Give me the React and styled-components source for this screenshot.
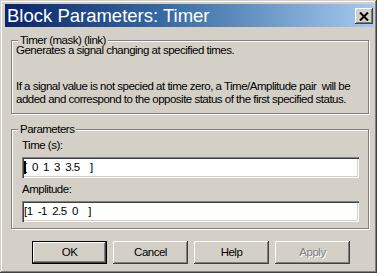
import React from 'react'
import styled, { createGlobalStyle } from 'styled-components'

const GlobalStyle = createGlobalStyle`
	html, body {
		margin: 0;
		padding: 0;
		background: #ffffff;
	}
`;

const face = `"Liberation Sans", Arial, sans-serif`;

const Window = styled("div")`
	box-sizing: border-box;
	width: 377px;
	height: 273px;
	padding: 4px 3px 0 5px;
	background: #D4D0C8;
	box-shadow:
		inset -1px -1px 0 #404040,
		inset 1px 1px 0 #D4D0C8,
		inset -2px -2px 0 #808080,
		inset 2px 2px 0 #ffffff;
	display: flex;
	flex-direction: column;
	font-family: ${face};
	font-size: 11.5px;
	letter-spacing: -0.5px;
	line-height: 13px;
	color: #000;
`;

const TitleBar = styled("div")`
	height: 23px;
	display: flex;
	align-items: center;
	justify-content: space-between;
	padding: 0 1px 0 2px;
	background: linear-gradient(to right, #0A246A 0%, #3A6EA5 45%, #A6CAF0 100%);
`;

const Title = styled("span")`
	font-size: 18.5px;
	letter-spacing: 0;
	color: #ffffff;
	line-height: 23px;
	white-space: nowrap;
`;

const CloseButton = styled("div")`
	box-sizing: border-box;
	width: 18px;
	height: 16px;
	margin-top: 1px;
	background: #D4D0C8;
	box-shadow:
		inset -1px -1px 0 #404040,
		inset 1px 1px 0 #ffffff,
		inset -2px -2px 0 #808080;
	display: flex;
	align-items: center;
	justify-content: center;
`;

const Body = styled("div")`
	display: flex;
	flex-direction: column;
	padding: 13px 0 0 6px;
`;

const Group = styled("div")`
	position: relative;
	box-sizing: border-box;
	width: 358px;
	margin-top: ${p => p.$top || 0}px;
	border: 1px solid #808080;
	box-shadow: inset 1px 1px 0 #ffffff, 1px 1px 0 #ffffff;
	padding: ${p => p.$pad};
	display: flex;
	flex-direction: column;
`;

const Legend = styled("span")`
	position: absolute;
	top: -6px;
	left: 6px;
	padding: 0 2px;
	line-height: 11px;
	background: #D4D0C8;
	white-space: nowrap;
`;

const Text = styled("p")`
	margin: ${p => p.$gap || 0}px 0 0 0;
	white-space: nowrap;
`;

const Label = styled("div")`
	margin-top: ${p => p.$gap || 0}px;
	white-space: nowrap;
`;

const Field = styled("div")`
	box-sizing: border-box;
	width: 337px;
	height: 21px;
	margin-top: 5px;
	padding: 0 2px 0 2px;
	background: #ffffff;
	box-shadow:
		inset 1px 1px 0 #808080,
		inset 2px 2px 0 #404040,
		inset -1px -1px 0 #ffffff,
		inset -2px -2px 0 #D4D0C8;
	display: flex;
	align-items: center;
	white-space: pre;
	word-spacing: 2.5px;
`;

const Caret = styled("span")`
	display: inline-block;
	width: 2px;
	height: 13px;
	margin-right: -2px;
	background: #000;
`;

const ButtonRow = styled("div")`
	display: flex;
	gap: 6px;
	margin: 12px 0 0 21px;
`;

const Button = styled("div")`
	box-sizing: border-box;
	width: 75px;
	height: 23px;
	background: #D4D0C8;
	display: flex;
	align-items: center;
	justify-content: center;
	color: ${p => p.$disabled ? '#808080' : '#000'};
	text-shadow: ${p => p.$disabled ? '1px 1px 0 #ffffff' : 'none'};
	box-shadow: ${p => p.$default
		? 'inset 0 0 0 1px #000, inset -2px -2px 0 #404040, inset 2px 2px 0 #ffffff, inset -3px -3px 0 #808080'
		: 'inset -1px -1px 0 #404040, inset 1px 1px 0 #ffffff, inset -2px -2px 0 #808080'};
`;

const CloseIcon = () => (
	<svg width="10" height="9" viewBox="0 0 10 9">
		<path d="M1 0.5 L9 8.5 M9 0.5 L1 8.5" stroke="#000" strokeWidth="2" fill="none" />
	</svg>
);

const App = () => {
	return (
		<>
			<GlobalStyle />
			<Window>
				<TitleBar>
					<Title>Block Parameters: Timer</Title>
					<CloseButton>
						<CloseIcon />
					</CloseButton>
				</TitleBar>
				<Body>
					<Group $pad="3px 4px 7px 4px">
						<Legend>Timer (mask) (link)</Legend>
						<Text>Generates a signal changing at specified times.</Text>
						<Text $gap={23}>
							If a signal value is not specied at time zero, a Time/Amplitude pair&nbsp; will be<br />
							added and correspond to the opposite status of the first specified status.
						</Text>
					</Group>
					<Group $top={15} $pad="9px 10px 6px 10px">
						<Legend>Parameters</Legend>
						<Label>Time (s):</Label>
						<Field><Caret />{"[ 0 1 3 3.5  ]"}</Field>
						<Label $gap={5}>Amplitude:</Label>
						<Field>{"[1 -1 2.5 0  ]"}</Field>
					</Group>
					<ButtonRow>
						<Button $default>OK</Button>
						<Button>Cancel</Button>
						<Button>Help</Button>
						<Button $disabled>Apply</Button>
					</ButtonRow>
				</Body>
			</Window>
		</>
	)
}

export default App;
